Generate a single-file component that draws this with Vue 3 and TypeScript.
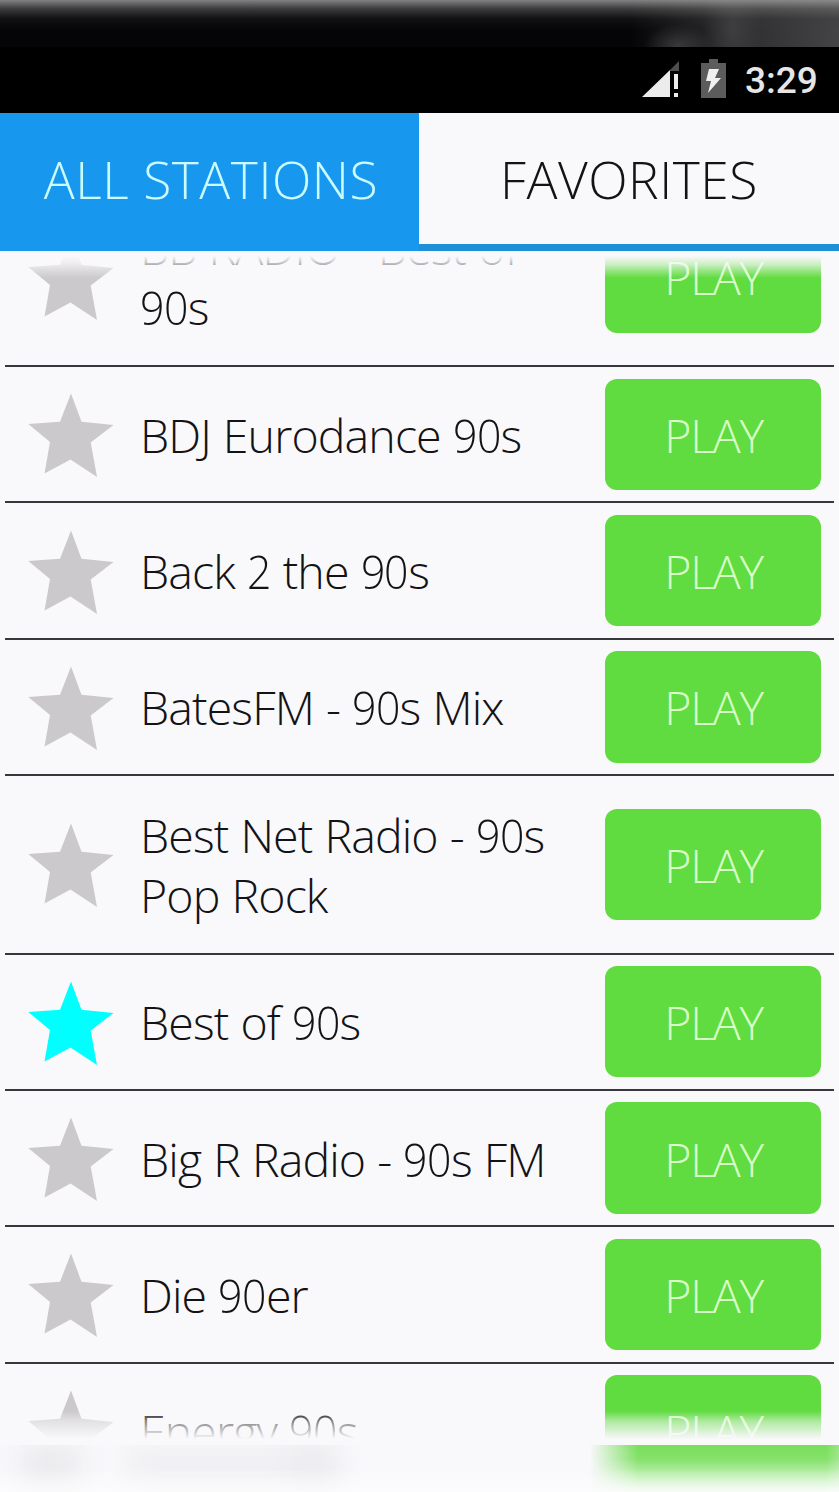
<script setup lang="ts">
interface Station {
  name: string[]
  favorite?: boolean
}

const stations: Station[] = [
  { name: ['BB RADIO - Best of', '90s'] },
  { name: ['BDJ Eurodance 90s'] },
  { name: ['Back 2 the 90s'] },
  { name: ['BatesFM - 90s Mix'] },
  { name: ['Best Net Radio - 90s', 'Pop Rock'] },
  { name: ['Best of 90s'], favorite: true },
  { name: ['Big R Radio - 90s FM'] },
  { name: ['Die 90er'] },
  { name: ['Energy 90s'] },
]

// Digits are set slightly condensed, so a line is split into digits and runs of text.
const parts = (line: string): string[] => line.split(/(\d)/).filter((p) => p !== '')
const isDigit = (p: string): boolean => /^\d$/.test(p)
</script>

<template>
  <div class="screen">
    <div class="top-glow"></div>
    <header class="status">
      <svg class="signal" viewBox="0 0 37 38" width="37" height="38">
        <path d="M28 10 37 1v10h-9z" fill="#4d4d4d" />
        <path d="M0 37 28 10v27z" fill="#ececec" />
        <path d="M32 14h4v15h-4zM32 33h4v4h-4z" fill="#ececec" />
      </svg>
      <svg class="battery" viewBox="0 0 25 39" width="25" height="39">
        <path d="M8 0h9v4h8v35H0V4h8z" fill="#5c5c5c" />
        <path d="M8 10h10l-4 9h6L7 34l3-12H5z" fill="#f0f0f0" />
      </svg>
      <span class="clock">3:29</span>
    </header>
    <nav class="tabs">
      <div class="tab active"><span>ALL STATIONS</span></div>
      <div class="tab"><span>FAVORITES</span></div>
    </nav>
    <main class="viewport">
      <ul class="list">
        <li v-for="s in stations" :key="s.name[0]" class="row" :class="{ tall: s.name.length > 1 }">
          <svg class="star" :class="{ on: s.favorite }" viewBox="0 0 86 85" width="86" height="85">
            <path d="M43 .5 53.5 28.7 85.5 32 62.7 49.5 69 84 42.5 66.5 16.5 80.5 22 49 .3 31 32 28.7z" />
          </svg>
          <div class="name">
            <div v-for="line in s.name" :key="line" class="line"><span v-for="(p, i) in parts(line)" :key="i" :class="{ digit: isDigit(p) }">{{ p }}</span></div>
          </div>
          <div class="play"><span>PLAY</span></div>
        </li>
      </ul>
      <div class="fade fade-top"></div>
      <div class="fade fade-bottom"></div>
    </main>
    <footer class="reflection">
      <i class="smudge s1"></i>
      <i class="smudge s2"></i>
      <i class="smudge s3"></i>
      <i class="green"></i>
      <i class="haze"></i>
    </footer>
  </div>
</template>

<style>
html,
body {
  margin: 0;
  overflow: hidden;
}
</style>

<style scoped>
.screen {
  width: 839px;
  height: 1492px;
  display: flex;
  flex-direction: column;
  overflow: hidden;
  background: #f9f8fb;
  font-family: 'Open Sans', 'Noto Sans', sans-serif;
  font-weight: 300;
  color: #131315;
}
.top-glow {
  height: 47px;
  flex: none;
  background:
    linear-gradient(180deg, rgba(150, 150, 150, 0.85) 0, rgba(110, 110, 110, 0.5) 9px, rgba(60, 60, 60, 0.2) 19px, transparent 30px),
    radial-gradient(ellipse 34px 22px at 678px 46px, rgba(90, 90, 90, 0.5), transparent),
    radial-gradient(ellipse 30px 60px at 732px 26px, rgba(90, 90, 90, 0.4), transparent),
    linear-gradient(90deg, #050508 0, #050508 630px, #2b2b2d 730px, #444446 839px);
}
.status {
  height: 66px;
  flex: none;
  box-sizing: border-box;
  padding: 0 21px 0 0;
  display: flex;
  justify-content: flex-end;
  align-items: flex-start;
  background: #000;
}
.signal {
  margin: 13px 22px 0 0;
}
.battery {
  margin: 12px 19px 0 0;
}
.clock {
  width: 73px;
  padding-top: 12px;
  font: 500 37px/44px Roboto, sans-serif;
  color: #e6e6e6;
  white-space: nowrap;
}
.tabs {
  height: 138px;
  flex: none;
  display: flex;
}
.tab {
  box-sizing: border-box;
  width: 420px;
  border-bottom: 7px solid #1e90d8;
  display: flex;
  align-items: center;
  justify-content: center;
  font-size: 51.5px;
  line-height: 70px;
  letter-spacing: 0.55px;
  white-space: nowrap;
}
.tab.active {
  width: 419px;
  padding-left: 3px;
  background: #1798ee;
  border-color: #1798ee;
  color: #c9fbff;
}
.viewport {
  height: 1194px;
  flex: none;
  position: relative;
  overflow: hidden;
}
.list {
  list-style: none;
  margin: -62.3px 0 0;
  padding: 0 5px;
}
.row {
  box-sizing: border-box;
  height: 136.35px;
  border-bottom: 2px solid #38373b;
  display: flex;
  align-items: center;
  padding: 0 13px 0 23px;
}
.row.tall {
  height: 178.4px;
}
.star {
  flex: none;
  margin-top: 3px;
  fill: #cbc9cc;
}
.star.on {
  fill: #00ffff;
}
.name {
  flex: 1;
  margin-left: 26px;
  padding-top: 1px;
  font-size: 46.5px;
  line-height: 60px;
  letter-spacing: -0.88px;
  word-spacing: 0.8px;
  white-space: nowrap;
}
.line {
  height: 60px;
  white-space: pre;
}
.digit {
  display: inline-block;
  transform: scaleX(0.92);
  transform-origin: left;
  margin-right: -0.04em;
}
.play {
  flex: none;
  box-sizing: border-box;
  width: 216px;
  height: 111.5px;
  padding: 1px 0 0 1px;
  border-radius: 12px;
  background: #60db40;
  color: #d9ffc9;
  display: flex;
  align-items: center;
  justify-content: center;
  font-size: 46.5px;
  letter-spacing: -1.3px;
}
.fade {
  position: absolute;
  left: 0;
  right: 0;
}
.fade-top {
  top: 0;
  height: 27px;
  background: linear-gradient(#f9f8fb 5px, rgba(249, 248, 251, 0.72) 13px, rgba(249, 248, 251, 0.4) 19px, rgba(249, 248, 251, 0));
}
.fade-bottom {
  bottom: 0;
  height: 34px;
  background: linear-gradient(rgba(249, 248, 251, 0), rgba(249, 248, 251, 0.5) 10px, #f9f8fb 28px);
}
.reflection {
  height: 47px;
  flex: none;
  position: relative;
  overflow: hidden;
}
.smudge {
  position: absolute;
  top: 0;
  height: 36px;
  background: #e9e8eb;
  filter: blur(14px);
}
.s1 {
  left: 22px;
  width: 58px;
}
.s2 {
  left: 125px;
  width: 210px;
  opacity: 0.6;
}
.s3 {
  left: 290px;
  width: 48px;
  opacity: 0.6;
}
.green {
  position: absolute;
  left: 590px;
  right: 0;
  top: 0;
  height: 47px;
  background: linear-gradient(#79de5b 0, #85e16b 14px, #b9eeab 29px, #f0faf0 47px);
  -webkit-mask-image: linear-gradient(90deg, transparent, rgba(0, 0, 0, 0.45) 22px, #000 48px, #000 236px, rgba(0, 0, 0, 0.75));
  mask-image: linear-gradient(90deg, transparent, rgba(0, 0, 0, 0.45) 22px, #000 48px, #000 236px, rgba(0, 0, 0, 0.75));
}
.haze {
  position: absolute;
  inset: 0;
  background: linear-gradient(transparent 24px, rgba(255, 255, 255, 0.5));
}
</style>
